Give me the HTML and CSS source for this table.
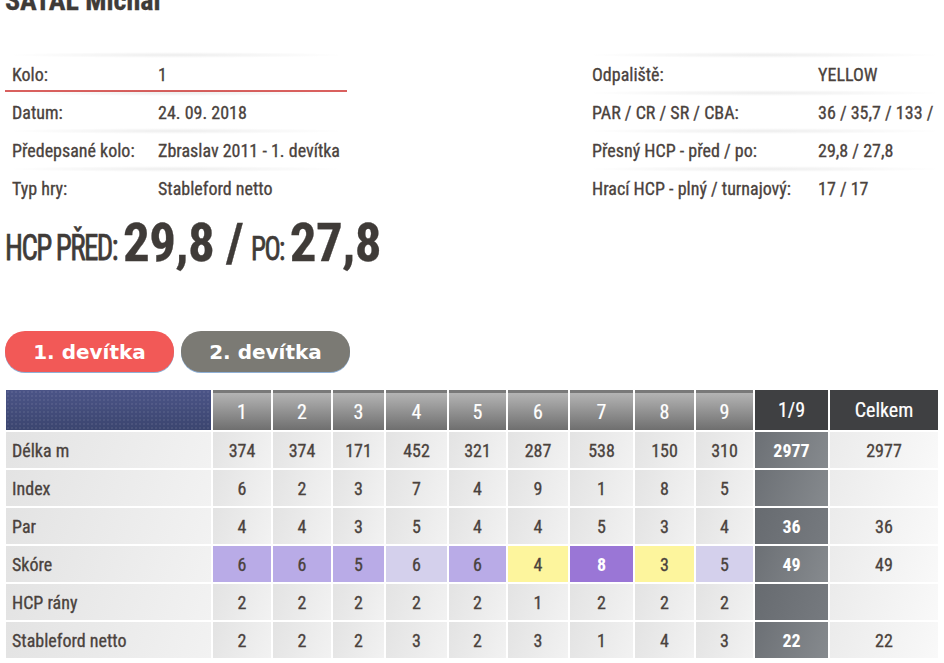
FILE: index.html
```html
<!DOCTYPE html>
<html lang="cs">
<head>
    <meta charset="UTF-8">
    <title>Výsledek kola</title>
    <link rel="stylesheet" href="styles.css">
</head>
<body>
    <h1 class="jmeno">SATAL Michal</h1>

    <div class="info">
        <div class="info-tab levy">
            <div class="radek aktivni"><span class="popis">Kolo:</span><span>1</span></div>
            <div class="radek"><span class="popis">Datum:</span><span>24. 09. 2018</span></div>
            <div class="radek"><span class="popis">Předepsané kolo:</span><span>Zbraslav 2011 - 1. devítka</span></div>
            <div class="radek"><span class="popis">Typ hry:</span><span>Stableford netto</span></div>
        </div>
        <div class="info-tab pravy">
            <div class="radek"><span class="popis">Odpaliště:</span><span>YELLOW</span></div>
            <div class="radek"><span class="popis">PAR / CR / SR / CBA:</span><span>36 / 35,7 / 133 /</span></div>
            <div class="radek"><span class="popis">Přesný HCP - před / po:</span><span>29,8 / 27,8</span></div>
            <div class="radek"><span class="popis">Hrací HCP - plný / turnajový:</span><span>17 / 17</span></div>
        </div>
    </div>

    <div class="hcp"><span class="hcp-popis">HCP PŘED:</span><strong>29,8 /</strong><span class="hcp-popis po">PO:</span><strong>27,8</strong></div>

    <div class="taby">
        <button class="tab aktivni">1. devítka</button>
        <button class="tab">2. devítka</button>
    </div>

    <table class="karta">
        <colgroup>
            <col style="width:205px">
            <col style="width:58px"><col style="width:58px"><col style="width:51px">
            <col style="width:61px"><col style="width:57px"><col style="width:60px">
            <col style="width:63px"><col style="width:59px"><col style="width:57px">
            <col style="width:73px"><col style="width:108px">
        </colgroup>
        <thead>
            <tr>
                <th class="roh"></th>
                <th>1</th><th>2</th><th>3</th><th>4</th><th>5</th><th>6</th><th>7</th><th>8</th><th>9</th>
                <th class="suma">1/9</th><th class="suma">Celkem</th>
            </tr>
        </thead>
        <tbody>
            <tr>
                <td class="nazev">Délka m</td>
                <td>374</td><td>374</td><td>171</td><td>452</td><td>321</td><td>287</td><td>538</td><td>150</td><td>310</td>
                <td class="devet">2977</td><td class="celkem">2977</td>
            </tr>
            <tr>
                <td class="nazev">Index</td>
                <td>6</td><td>2</td><td>3</td><td>7</td><td>4</td><td>9</td><td>1</td><td>8</td><td>5</td>
                <td class="devet"></td><td class="celkem"></td>
            </tr>
            <tr>
                <td class="nazev">Par</td>
                <td>4</td><td>4</td><td>3</td><td>5</td><td>4</td><td>4</td><td>5</td><td>3</td><td>4</td>
                <td class="devet tmava">36</td><td class="celkem">36</td>
            </tr>
            <tr>
                <td class="nazev">Skóre</td>
                <td class="double">6</td><td class="double">6</td><td class="double">5</td><td class="bogey">6</td><td class="double">6</td>
                <td class="par">4</td><td class="triple">8</td><td class="par">3</td><td class="bogey">5</td>
                <td class="devet">49</td><td class="celkem">49</td>
            </tr>
            <tr>
                <td class="nazev">HCP rány</td>
                <td>2</td><td>2</td><td>2</td><td>2</td><td>2</td><td>1</td><td>2</td><td>2</td><td>2</td>
                <td class="devet tmava"></td><td class="celkem"></td>
            </tr>
            <tr>
                <td class="nazev">Stableford netto</td>
                <td>2</td><td>2</td><td>2</td><td>3</td><td>2</td><td>3</td><td>1</td><td>4</td><td>3</td>
                <td class="devet">22</td><td class="celkem">22</td>
            </tr>
        </tbody>
    </table>
</body>
</html>
```
FILE: styles.css
```css
body {
    margin: 0;
    padding: 0 0 0 5px;
    background: #fff;
    color: #4a423d;
    font-family: "Roboto Condensed", "Liberation Sans Narrow", "DejaVu Sans Condensed", Roboto, sans-serif;
    font-stretch: condensed;
    -webkit-text-stroke: 0.3px currentColor;
    overflow: hidden;
}
.jmeno {
    margin: -16px 0 0;
    font-size: 28px;
    line-height: 34px;
    font-weight: bold;
    color: #3f3b38;
}
.info {
    display: flex;
    justify-content: space-between;
    margin-top: 37px;
}
.info-tab {
    display: flex;
    flex-direction: column;
}
.levy {
    width: 342px;
}
.pravy {
    width: 359px;
}
.radek {
    position: relative;
    display: flex;
    align-items: center;
    height: 38px;
    padding-left: 7px;
    font-size: 18px;
}
.radek::before {
    content: "";
    position: absolute;
    left: 0;
    right: 0;
    top: -3px;
    height: 6px;
    background: radial-gradient(ellipse at center, rgba(0, 0, 0, 0.07), rgba(0, 0, 0, 0) 70%);
}
.radek.aktivni::after {
    content: "";
    position: absolute;
    left: 0;
    right: 0;
    bottom: 1px;
    height: 2px;
    background: #d9605e;
}
.levy .popis {
    width: 146px;
}
.pravy .popis {
    width: 226px;
}
.hcp {
    margin-top: 10px;
    font-size: 34px;
    line-height: 52px;
    color: #3f3b38;
}
.hcp-popis {
    display: inline-block;
    font-size: 29px;
    letter-spacing: -1.6px;
    transform: scaleY(1.25);
    transform-origin: 0 75%;
    -webkit-text-stroke: 0.6px currentColor;
}
.hcp-popis.po {
    font-size: 27px;
}
.hcp strong {
    font-size: 53px;
    letter-spacing: -0.5px;
    margin: 0 8px 0 6px;
}
.taby {
    display: flex;
    gap: 7px;
    margin-top: 53px;
}
.tab {
    width: 169px;
    height: 41px;
    border: 0;
    border-radius: 20px;
    color: #fff;
    font-family: "DejaVu Sans", sans-serif;
    font-stretch: normal;
    font-weight: bold;
    font-size: 20px;
    -webkit-text-stroke: 0;
    background: #7b7a74;
    box-shadow: 0 1px 0 #8fb0d6;
}
.tab.aktivni {
    background: #f25957;
}
.karta {
    margin: 16px 0 0 -1px;
    table-layout: fixed;
    border-collapse: separate;
    border-spacing: 2px;
    font-size: 18px;
}
.karta th {
    height: 37px;
    padding: 0;
    color: #fff;
    font-weight: normal;
    font-size: 20px;
    -webkit-text-stroke: 0.2px currentColor;
    border-top: 3px solid #797979;
    background: linear-gradient(#b4b4b4, #6f6f6f);
}
.karta th.roh {
    border-top: 0;
    height: 40px;
    background-color: #424d7b;
    background-image: radial-gradient(rgba(255, 255, 255, 0.07) 0.7px, transparent 1px), linear-gradient(#4b5487, #3b456f);
    background-size: 4px 4px, 100% 100%;
}
.karta th.suma {
    border-top: 0;
    height: 40px;
    background: #3f4042;
}
.karta td {
    height: 36px;
    padding: 0;
    text-align: center;
    background: linear-gradient(110deg, #e3e3e3, #f2f2f2);
}
.karta td.nazev {
    text-align: left;
    padding-left: 6px;
}
.karta td.devet {
    color: #fff;
    font-weight: bold;
    -webkit-text-stroke: 0;
    background: linear-gradient(110deg, #6c7075, #868a8e);
}
.karta td.devet.tmava {
    background: linear-gradient(110deg, #676b70, #767a7f);
}
.karta td.celkem {
    background: linear-gradient(110deg, #ebebeb, #f9f9f9);
}
.karta td.double {
    background: #b9abe7;
}
.karta td.bogey {
    background: #d4d0ec;
}
.karta td.par {
    background: #fdf59d;
}
.karta td.triple {
    color: #fff;
    font-weight: bold;
    -webkit-text-stroke: 0;
    background: #9a76d6;
}
```
